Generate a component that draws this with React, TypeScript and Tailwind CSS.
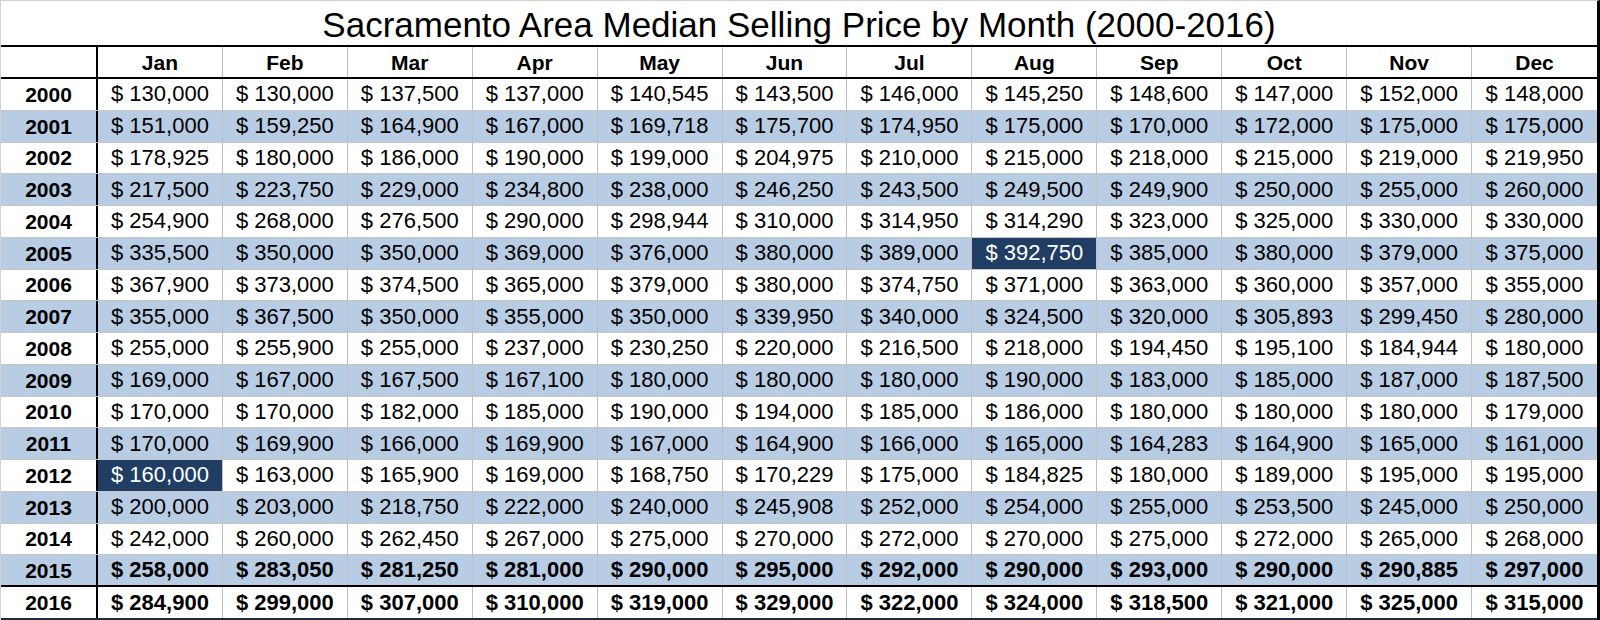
const months = ["Jan", "Feb", "Mar", "Apr", "May", "Jun", "Jul", "Aug", "Sep", "Oct", "Nov", "Dec"];

const rows: [string, number[]][] = [
  ["2000", [130000, 130000, 137500, 137000, 140545, 143500, 146000, 145250, 148600, 147000, 152000, 148000]],
  ["2001", [151000, 159250, 164900, 167000, 169718, 175700, 174950, 175000, 170000, 172000, 175000, 175000]],
  ["2002", [178925, 180000, 186000, 190000, 199000, 204975, 210000, 215000, 218000, 215000, 219000, 219950]],
  ["2003", [217500, 223750, 229000, 234800, 238000, 246250, 243500, 249500, 249900, 250000, 255000, 260000]],
  ["2004", [254900, 268000, 276500, 290000, 298944, 310000, 314950, 314290, 323000, 325000, 330000, 330000]],
  ["2005", [335500, 350000, 350000, 369000, 376000, 380000, 389000, 392750, 385000, 380000, 379000, 375000]],
  ["2006", [367900, 373000, 374500, 365000, 379000, 380000, 374750, 371000, 363000, 360000, 357000, 355000]],
  ["2007", [355000, 367500, 350000, 355000, 350000, 339950, 340000, 324500, 320000, 305893, 299450, 280000]],
  ["2008", [255000, 255900, 255000, 237000, 230250, 220000, 216500, 218000, 194450, 195100, 184944, 180000]],
  ["2009", [169000, 167000, 167500, 167100, 180000, 180000, 180000, 190000, 183000, 185000, 187000, 187500]],
  ["2010", [170000, 170000, 182000, 185000, 190000, 194000, 185000, 186000, 180000, 180000, 180000, 179000]],
  ["2011", [170000, 169900, 166000, 169900, 167000, 164900, 166000, 165000, 164283, 164900, 165000, 161000]],
  ["2012", [160000, 163000, 165900, 169000, 168750, 170229, 175000, 184825, 180000, 189000, 195000, 195000]],
  ["2013", [200000, 203000, 218750, 222000, 240000, 245908, 252000, 254000, 255000, 253500, 245000, 250000]],
  ["2014", [242000, 260000, 262450, 267000, 275000, 270000, 272000, 270000, 275000, 272000, 265000, 268000]],
  ["2015", [258000, 283050, 281250, 281000, 290000, 295000, 292000, 290000, 293000, 290000, 290885, 297000]],
];

const last: [string, number[]] = ["2016", [284900, 299000, 307000, 310000, 319000, 329000, 322000, 324000, 318500, 321000, 325000, 315000]];

const fmt = (n: number) => "$ " + n.toLocaleString("en-US");

// low point / peak marked in dark navy
const isMark = (year: string, m: number) => (year === "2005" && m === 7) || (year === "2012" && m === 0);

export default function App() {
  return (
    <div
      className="flex h-[620px] w-[1600px] flex-col overflow-hidden border-t border-l border-r-[3px] border-t-[#d0d0d0] border-l-[#d0d0d0] border-r-black bg-white leading-none text-black"
      style={{ fontFamily: '"Liberation Sans", Arial, sans-serif' }}
    >
      <div className="flex h-[46px] shrink-0 items-center justify-center border-b-2 border-black pt-[2px] text-[35px]">
        Sacramento Area Median Selling Price by Month (2000-2016)
      </div>

      <div className="grid h-[32px] shrink-0 grid-cols-[97px_repeat(12,1fr)] border-b-2 border-black text-[21px] font-bold">
        <div className="border-r-2 border-black" />
        {months.map((m, i) => (
          <div
            key={m}
            className={`flex items-center justify-center ${i < 11 ? "border-r border-[#bfbfbf]" : ""}`}
          >
            {m}
          </div>
        ))}
      </div>

      <div className="grid h-[508px] shrink-0 grid-rows-[repeat(16,minmax(0,1fr))]">
        {rows.map(([year, vals], r) => {
          const blue = r % 2 === 1;
          const bold = year === "2015";
          return (
            <div
              key={year}
              className={`grid min-h-0 grid-cols-[97px_repeat(12,1fr)] text-[22px] ${
                blue ? "bg-[#b8cce4]" : "bg-white"
              } ${bold ? "border-b-2 border-black font-bold" : "border-b border-[#c6c6c6]"}`}
            >
              <div className="flex items-center justify-center border-r-2 border-black text-[21px] font-bold">
                {year}
              </div>
              {vals.map((v, i) => (
                <div
                  key={i}
                  className={`flex items-center justify-center ${i < 11 ? "border-r border-[#bfbfbf]" : ""} ${
                    isMark(year, i) ? "bg-[#203d63] text-white" : ""
                  }`}
                >
                  {fmt(v)}
                </div>
              ))}
            </div>
          );
        })}
      </div>

      <div className="grid min-h-0 flex-1 grid-cols-[97px_repeat(12,1fr)] border-b-2 border-[#1d2b3d] text-[22px] font-bold">
        <div className="flex items-center justify-center border-r-2 border-black text-[21px]">{last[0]}</div>
        {last[1].map((v, i) => (
          <div
            key={i}
            className={`flex items-center justify-center ${i < 11 ? "border-r border-[#bfbfbf]" : ""}`}
          >
            {fmt(v)}
          </div>
        ))}
      </div>
    </div>
  );
}
